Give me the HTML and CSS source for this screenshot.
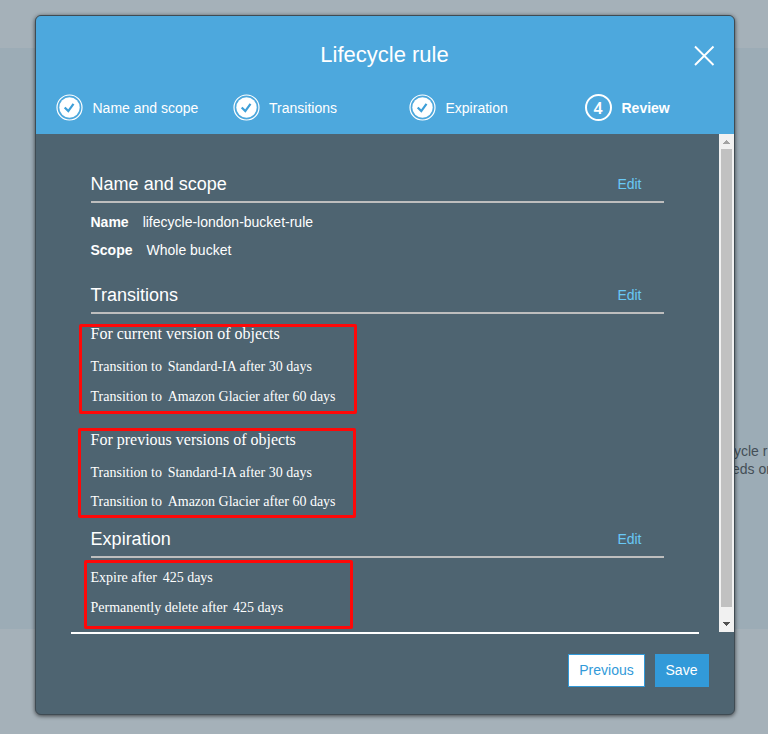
FILE: index.html
```html
<!DOCTYPE html>
<html lang="en">
<head>
<meta charset="utf-8">
<title>Lifecycle rule</title>
<link rel="stylesheet" href="styles.css">
</head>
<body>
<div class="page">
  <p class="page-text">ycle r</p>
  <p class="page-text second">eds or</p>
</div>
<div class="modal">
  <header class="header">
    <div class="title-row">
      <h1>Lifecycle rule</h1>
      <svg class="close" width="22" height="22" viewBox="0 0 22 22"><path d="M1 1.500l18.500 18.500M19.500 1.500L1 20" fill="none" stroke="#fff" stroke-width="1.900"/></svg>
    </div>
    <nav class="steps">
      <div class="step"><svg width="28" height="28" viewBox="0 0 28 28"><circle cx="14.500" cy="13.500" r="12.500" fill="none" stroke="#fff" stroke-width="1.200"/><circle cx="14.500" cy="13.500" r="10.200" fill="#fff"/><path d="M9.700 13.500l3.600 3.600 5.200-7.200" fill="none" stroke="#3e9fd8" stroke-width="2.200"/></svg><span>Name and scope</span></div>
      <div class="step"><svg width="28" height="28" viewBox="0 0 28 28"><circle cx="14.500" cy="13.500" r="12.500" fill="none" stroke="#fff" stroke-width="1.200"/><circle cx="14.500" cy="13.500" r="10.200" fill="#fff"/><path d="M9.700 13.500l3.600 3.600 5.200-7.200" fill="none" stroke="#3e9fd8" stroke-width="2.200"/></svg><span>Transitions</span></div>
      <div class="step"><svg width="28" height="28" viewBox="0 0 28 28"><circle cx="14.500" cy="13.500" r="12.500" fill="none" stroke="#fff" stroke-width="1.200"/><circle cx="14.500" cy="13.500" r="10.200" fill="#fff"/><path d="M9.700 13.500l3.600 3.600 5.200-7.200" fill="none" stroke="#3e9fd8" stroke-width="2.200"/></svg><span>Expiration</span></div>
      <div class="step current"><b class="number">4</b><span>Review</span></div>
    </nav>
  </header>
  <div class="body">
    <main class="content">
      <section class="scope">
        <div class="section-head"><h2>Name and scope</h2><a>Edit</a></div>
        <dl>
          <div><dt>Name</dt><dd>lifecycle-london-bucket-rule</dd></div>
          <div><dt>Scope</dt><dd>Whole bucket</dd></div>
        </dl>
      </section>
      <section class="transitions">
        <div class="section-head"><h2>Transitions</h2><a>Edit</a></div>
        <div class="group">
          <h3>For current version of objects</h3>
          <p><span>Transition to</span><span>Standard-IA after 30 days</span></p>
          <p><span>Transition to</span><span>Amazon Glacier after 60 days</span></p>
          <i class="mark mark-current"></i>
        </div>
        <div class="group">
          <h3>For previous versions of objects</h3>
          <p><span>Transition to</span><span>Standard-IA after 30 days</span></p>
          <p><span>Transition to</span><span>Amazon Glacier after 60 days</span></p>
          <i class="mark mark-previous"></i>
        </div>
      </section>
      <section class="expiration">
        <div class="section-head"><h2>Expiration</h2><a>Edit</a></div>
        <div class="group">
          <p><span>Expire after</span><span>425 days</span></p>
          <p><span>Permanently delete after</span><span>425 days</span></p>
          <i class="mark mark-expiration"></i>
        </div>
      </section>
    </main>
    <div class="scrollbar">
      <svg width="15" height="15" viewBox="0 0 15 15" shape-rendering="crispEdges"><path d="M4 10L7.500 6L11 10Z" fill="#a3a3a3"/></svg>
      <div class="thumb"></div>
      <svg width="15" height="15" viewBox="0 0 15 15" shape-rendering="crispEdges"><path d="M4 5L7.500 9L11 5Z" fill="#505050"/></svg>
    </div>
  </div>
  <footer class="footer">
    <button class="previous">Previous</button>
    <button class="save">Save</button>
  </footer>
</div>
</body>
</html>
```

FILE: styles.css
```css
* { box-sizing: border-box; }
body {
  margin: 0;
  height: 734px;
  overflow: hidden;
  padding: 15px 0 0 35px;
  background: #a5b1b9;
  font: 14px "Liberation Sans", Arial, sans-serif;
  color: #fff;
}
h1, h2, h3, p, dl, dd { margin: 0; font-weight: normal; }

.page {
  position: absolute;
  z-index: -1;
  inset: 48px 0 105px;
  overflow: hidden;
  padding-top: 394px;
  background: #9cacb6;
}
.page-text {
  margin-left: 734px;
  width: 60px;
  line-height: 18px;
  color: #444f57;
  white-space: nowrap;
}
.page-text.second { margin-left: 732px; }

.modal {
  width: 700px;
  height: 700px;
  display: flex;
  flex-direction: column;
  border: 1px solid #3f4b53;
  border-radius: 6px;
  background: #4e6471;
  box-shadow: 0 1px 4px rgba(0, 0, 0, .65);
}
.header {
  height: 118px;
  border-radius: 5px 5px 0 0;
  background: #4da8dd;
}
.title-row {
  display: grid;
  grid-template-columns: 60px 1fr 60px;
  align-items: center;
  height: 78px;
}
.title-row h1 { grid-column: 2; padding-right: 1px; font-size: 22px; text-align: center; line-height: 78px; }
.close { margin-left: 20px; margin-top: 2px; }
.steps { display: flex; padding-left: 19px; }
.step { display: flex; flex: none; align-items: center; gap: 9.500px; width: 176.500px; height: 28px; }
.step svg { flex: none; }
.step.current { width: auto; gap: 10px; font-weight: bold; }
.number {
  width: 27px;
  height: 27px;
  margin-bottom: 1px;
  border: 2px solid #fff;
  border-radius: 50%;
  font: 600 16px/24px "Noto Sans", "Open Sans", sans-serif;
  text-align: center;
}

.body { display: flex; height: 498px; }
.content { flex: 1; padding: 31px 55px 0; }
.section-head {
  display: flex;
  justify-content: space-between;
  height: 38px;
  padding-right: 22.500px;
  border-bottom: 2px solid #bebebe;
  line-height: 39px;
}
.section-head h2 { margin-left: -.4px; font-size: 18px; }
.section-head a { color: #69c8f5; }
dl { padding-top: 5px; }
dl div { display: flex; gap: 14px; margin-left: -.5px; line-height: 28px; }
dt { font-weight: bold; }
.scope { height: 111px; }
.transitions { height: 244px; }

.group { position: relative; font-family: "Liberation Serif", "Times New Roman", serif; }
.group h3 { margin-left: -.5px; padding-top: 10px; margin-bottom: 8px; font-size: 16px; line-height: 20px; }
.group p { display: flex; gap: 5.700px; margin-left: -.5px; line-height: 30px; }
.transitions .group + .group { padding-top: 8px; }
.transitions .group + .group p + p { margin-top: -1px; }
.expiration .group { padding-top: 5px; }
.mark { position: absolute; border: 3px solid #ff0808; border-radius: 2px; }
.mark-current { left: -12px; top: 10px; width: 278px; height: 90px; }
.mark-previous { left: -13px; top: 16px; width: 278px; height: 90px; }
.mark-expiration { left: -7px; top: 2px; width: 269px; height: 69px; }

.scrollbar { display: flex; flex-direction: column; width: 15px; background: #f1f1f1; }
.thumb { width: 11px; height: 458px; margin: 0 2px 10px; background: #c1c1c1; }

.footer {
  display: flex;
  justify-content: flex-end;
  gap: 10px;
  width: 628px;
  margin-left: 35px;
  border-top: 2px solid #fff;
  padding-top: 20px;
}
.footer button {
  height: 33px;
  padding: 0 1px 2px 0;
  border: 1px solid #329ad9;
  font: inherit;
  background: #329ad9;
  color: #fff;
}
.footer .previous { width: 77px; padding-right: 0; background: #fff; color: #329ad9; }
.footer .save { width: 54px; margin-right: -10px; }
```
